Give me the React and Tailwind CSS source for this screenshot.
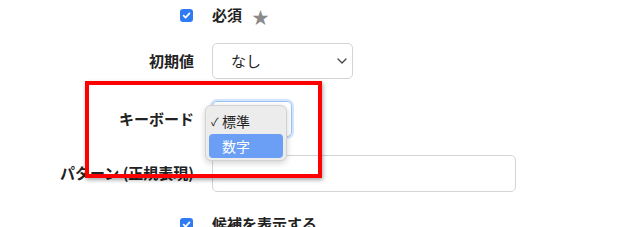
import { useState } from 'react';

function CheckBox() {
  return (
    <span className="w-[13px] h-[13px] rounded-[3px] bg-[#2f7bf5] flex items-center justify-center">
      <svg width="9" height="9" viewBox="0 0 10 10" fill="none">
        <path d="M1.8 5.2 L4 7.4 L8.3 2.6" stroke="white" strokeWidth="1.9" strokeLinecap="round" strokeLinejoin="round" />
      </svg>
    </span>
  );
}

function Chevron() {
  return (
    <svg width="10" height="6" viewBox="0 0 10 6" fill="none">
      <path d="M1 1 L5 5 L9 1" stroke="#444" strokeWidth="1.3" strokeLinecap="round" strokeLinejoin="round" />
    </svg>
  );
}

export default function App() {
  const [keyboard] = useState('数字');

  return (
    <div
      className="relative w-[640px] h-[227px] overflow-hidden bg-white text-[#222] text-[15px]"
      style={{ fontFamily: '"Noto Sans CJK JP", "Noto Sans", sans-serif' }}
    >
      <div className="pt-[4px]">
        {/* 必須 */}
        <div className="grid grid-cols-[194px_1fr] gap-x-[18px] h-[22px] items-center">
          <div className="flex justify-end pr-[1px]"><CheckBox /></div>
          <div className="flex items-center gap-[10px]">
            <span className="font-semibold">必須</span>
            <span className="text-[#8a8a8a] text-[17px] leading-none mt-[3px]">★</span>
          </div>
        </div>

        {/* 初期値 */}
        <div className="grid grid-cols-[194px_1fr] gap-x-[18px] h-[36px] items-center mt-[17px]">
          <div className="text-right font-semibold">初期値</div>
          <div className="w-[141px] h-[36px] border border-[#d4d4d4] rounded-[5px] flex items-center justify-between pl-[18px] pr-[5px]">
            <span>なし</span>
            <Chevron />
          </div>
        </div>

        {/* キーボード */}
        <div className="grid grid-cols-[194px_1fr] gap-x-[18px] h-[36px] items-center mt-[22px]">
          <div className="text-right font-semibold">キーボード</div>
          <div className="relative w-[80px] h-[36px]">
            <div className="w-[80px] h-[36px] border border-[#9cc3f2] rounded-[5px] shadow-[0_0_0_2px_rgba(130,180,245,0.35)]"></div>
            <div className="absolute left-[-7px] top-[4px] w-[82px] h-[56px] bg-[#ececec] border border-[#d2d2d2] rounded-[6px] shadow-[0_2px_6px_rgba(0,0,0,0.18)] px-[3px] pt-[3px]">
              <div className="h-[24px] flex items-center pl-[2px] text-[14px]">
                <span className="text-[11px] w-[9px] mr-[2px]">✓</span>
                <span>標準</span>
              </div>
              <div className="h-[24px] mt-[1px] rounded-[4px] bg-[#6a9ff5] text-white flex items-center pl-[13px] text-[14px]">
                {keyboard}
              </div>
            </div>
          </div>
        </div>

        {/* パターン */}
        <div className="grid grid-cols-[194px_1fr] gap-x-[18px] h-[36px] items-center mt-[18px]">
          <div className="text-right font-semibold whitespace-nowrap">パターン (正規表現)</div>
          <div className="w-[304px] h-[37px] border border-[#d4d4d4] rounded-[5px]"></div>
        </div>

        {/* 候補を表示する */}
        <div className="grid grid-cols-[194px_1fr] gap-x-[18px] h-[22px] items-center mt-[22px]">
          <div className="flex justify-end pr-[1px]"><CheckBox /></div>
          <div className="font-semibold">候補を表示する</div>
        </div>
      </div>

      {/* annotation */}
      <div className="absolute left-[85px] top-[81px] w-[237px] h-[97px] border-[4px] border-[#ff0000] shadow-[1px_2px_4px_rgba(0,0,0,0.35)]"></div>
    </div>
  );
}
